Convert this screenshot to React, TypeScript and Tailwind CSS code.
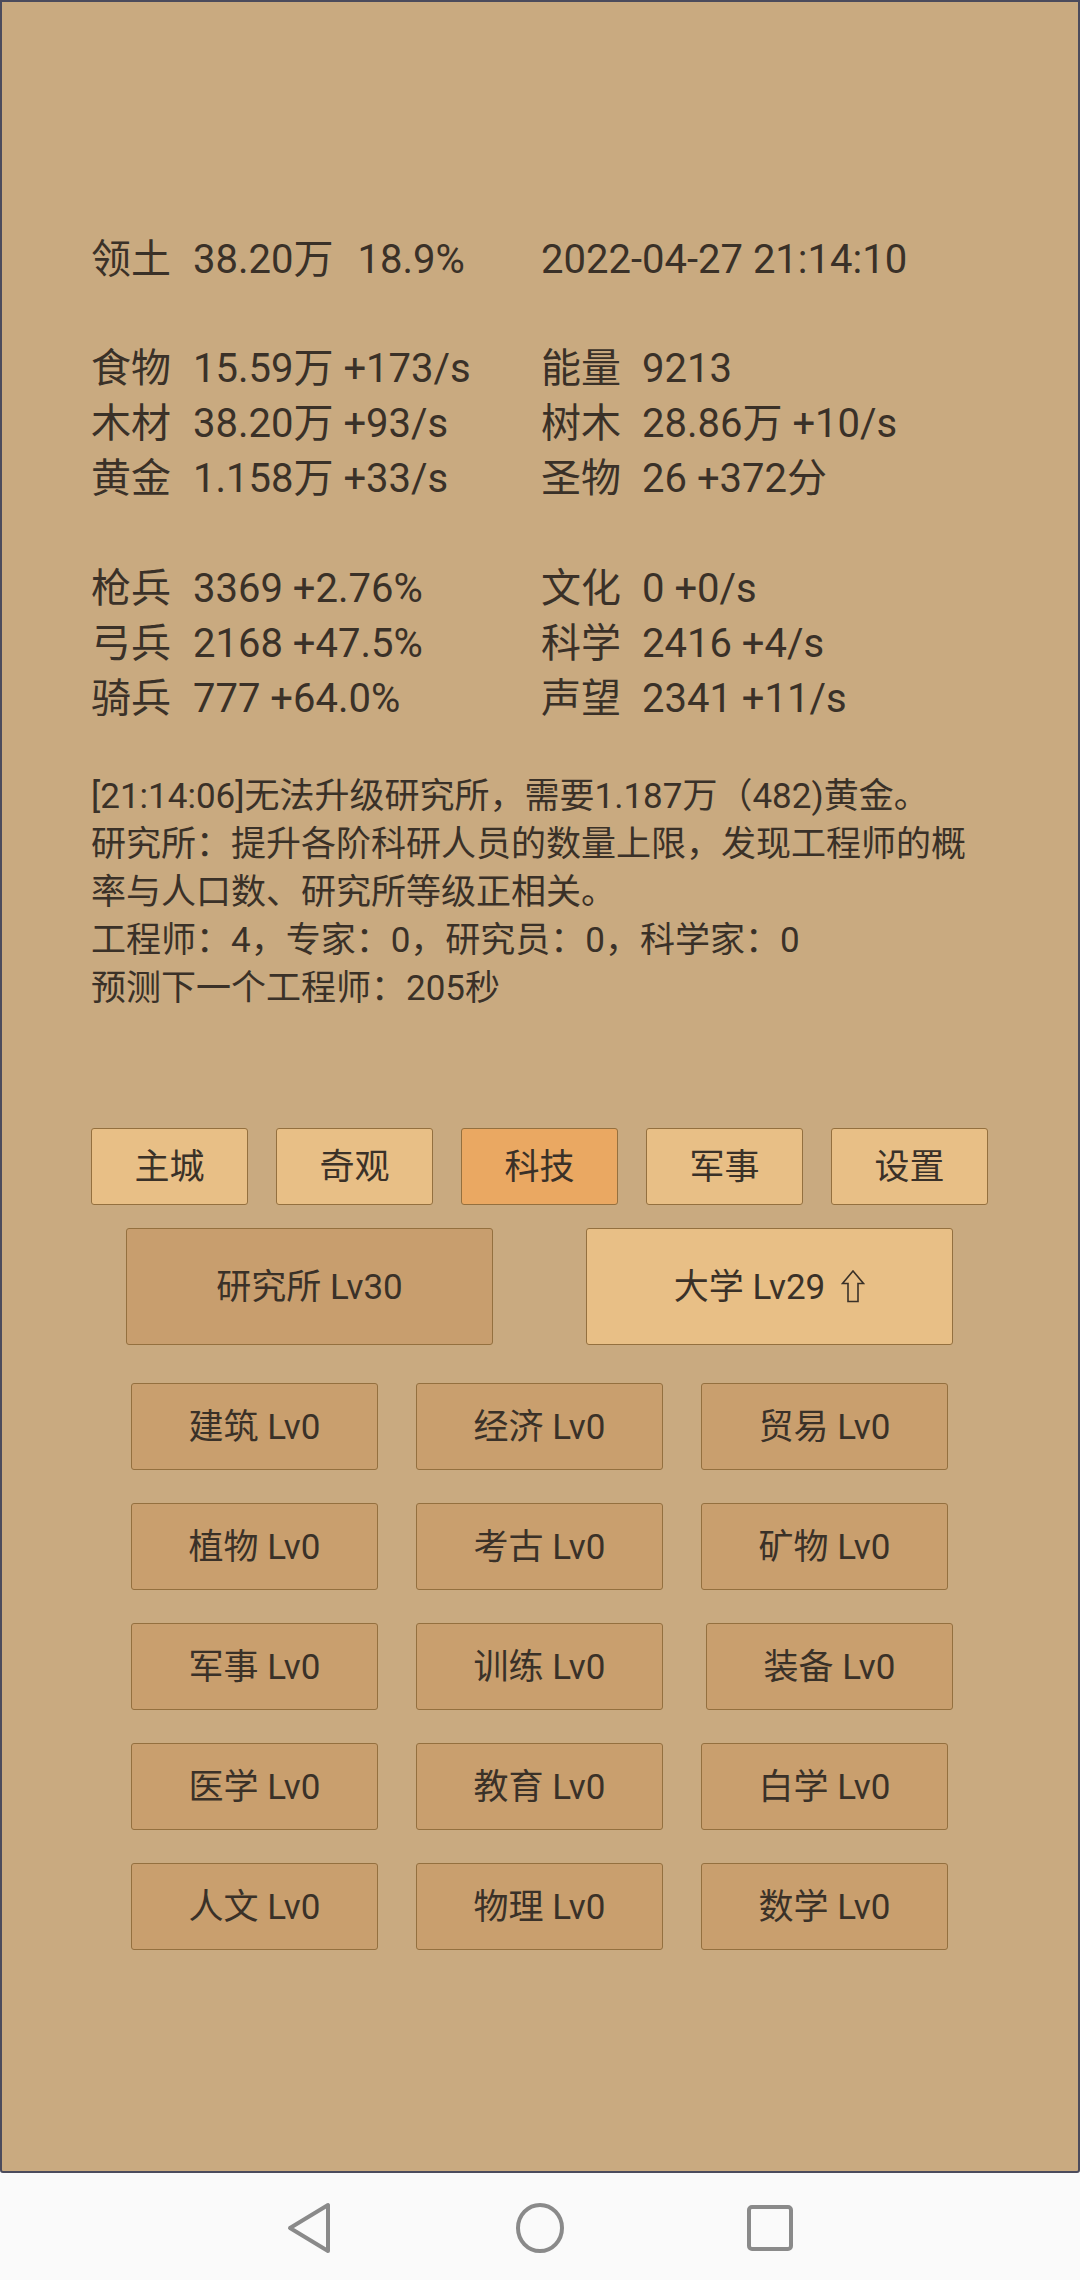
import React from "react";

const stats1 = [
  { label: "食物", value: "15.59万 +173/s", label2: "能量", value2: "9213" },
  { label: "木材", value: "38.20万 +93/s", label2: "树木", value2: "28.86万 +10/s" },
  { label: "黄金", value: "1.158万 +33/s", label2: "圣物", value2: "26 +372分" },
];

const stats2 = [
  { label: "枪兵", value: "3369 +2.76%", label2: "文化", value2: "0 +0/s" },
  { label: "弓兵", value: "2168 +47.5%", label2: "科学", value2: "2416 +4/s" },
  { label: "骑兵", value: "777 +64.0%", label2: "声望", value2: "2341 +11/s" },
];

const tabs = ["主城", "奇观", "科技", "军事", "设置"];

const techs = [
  "建筑", "经济", "贸易",
  "植物", "考古", "矿物",
  "军事", "训练", "装备",
  "医学", "教育", "白学",
  "人文", "物理", "数学",
];

const StatRow = ({ label, value, label2, value2 }: { label: string; value: string; label2: string; value2: string }) => (
  <div className="flex h-[55px] items-center">
    <div className="flex w-[450px]">
      <span className="w-[102px]">{label}</span>
      <span>{value}</span>
    </div>
    <div className="flex">
      <span className="w-[101px]">{label2}</span>
      <span>{value2}</span>
    </div>
  </div>
);

const UpArrow = () => (
  <svg width="24" height="33" viewBox="0 0 24 33" className="ml-[16px] mt-[-4px]">
    <path d="M12 1 L1.5 13.5 L7 13.5 L7 31.5 L17 31.5 L17 13.5 L22.5 13.5 Z" fill="none" stroke="#3a3128" strokeWidth="1.6" strokeLinejoin="miter" />
  </svg>
);

export default function App() {
  return (
    <div className="w-[1080px] h-[2280px] flex flex-col bg-[#fafafa] text-[#3a3128] font-['Roboto','Noto_Sans_CJK_SC',sans-serif]">
      {/* game panel */}
      <div className="h-[2173px] border-2 border-[#4b4b5c] rounded-b-[3px] bg-[#c9aa80] pl-[89px] pt-[230px]">
        <div className="text-[40px] leading-[55px]">
          <div className="flex h-[55px] items-center">
            <div className="flex w-[450px]">
              <span className="w-[102px]">领土</span>
              <span>38.20万</span>
              <span className="ml-[24px]">18.9%</span>
            </div>
            <span>2022-04-27 21:14:10</span>
          </div>

          <div className="mt-[54px]">
            {stats1.map((s) => (
              <StatRow key={s.label} {...s} />
            ))}
          </div>

          <div className="mt-[55px]">
            {stats2.map((s) => (
              <StatRow key={s.label} {...s} />
            ))}
          </div>
        </div>

        {/* message log */}
        <div className="mt-[47px] w-[892px] text-[35px] leading-[48px]">
          <p>[21:14:06]无法升级研究所，需要1.187万（482)黄金。</p>
          <p>研究所：提升各阶科研人员的数量上限，发现工程师的概率与人口数、研究所等级正相关。</p>
          <p>工程师：4，专家：0，研究员：0，科学家：0</p>
          <p>预测下一个工程师：205秒</p>
        </div>

        {/* tabs */}
        <div className="mt-[115px] flex gap-[28px] text-[35px]">
          {tabs.map((t) => (
            <div
              key={t}
              className={`w-[157px] h-[77px] pt-[4px] flex items-center justify-center rounded-[3px] border border-[#94703f] ${
                t === "科技" ? "bg-[#eaa862]" : "bg-[#e8bf86]"
              }`}
            >
              {t}
            </div>
          ))}
        </div>

        {/* buildings */}
        <div className="mt-[23px] ml-[35px] flex gap-[93px] text-[35px]">
          <div className="w-[367px] h-[117px] pt-[4px] flex items-center justify-center rounded-[3px] border border-[#94703f] bg-[#c89e6e]">
            研究所 Lv30
          </div>
          <div className="w-[367px] h-[117px] pt-[4px] flex items-center justify-center rounded-[3px] border border-[#94703f] bg-[#e8bf86]">
            大学 Lv29
            <UpArrow />
          </div>
        </div>

        {/* tech grid */}
        <div className="mt-[38px] ml-[40px] grid grid-cols-[247px_247px_247px] gap-x-[38px] gap-y-[33px] text-[35px]">
          {techs.map((t, i) => (
            <div
              key={i}
              className={`w-[247px] h-[87px] pt-[4px] flex items-center justify-center rounded-[3px] border border-[#94703f] bg-[#c99f6e] ${
                i === 8 ? "ml-[5px]" : ""
              }`}
            >
              {t} Lv0
            </div>
          ))}
        </div>
      </div>

      {/* android nav bar */}
      <div className="flex-1 flex items-center justify-center gap-[180px] pt-[2px]">
        <svg width="48" height="54" viewBox="0 0 48 54">
          <path d="M42 4 L42 50 L4 27 Z" fill="none" stroke="#8a8a8a" strokeWidth="4" strokeLinejoin="round" />
        </svg>
        <svg width="52" height="52" viewBox="0 0 52 52">
          <ellipse cx="26" cy="26" rx="22" ry="23" fill="none" stroke="#8a8a8a" strokeWidth="4" />
        </svg>
        <svg width="48" height="48" viewBox="0 0 48 48">
          <rect x="3" y="3" width="42" height="42" rx="3" fill="none" stroke="#8a8a8a" strokeWidth="4" />
        </svg>
      </div>
    </div>
  );
}
